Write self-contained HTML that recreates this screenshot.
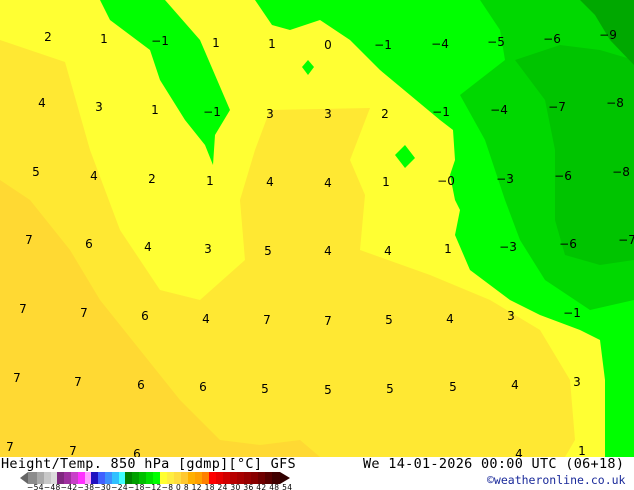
<!DOCTYPE html>
<html><head><meta charset="utf-8"><style>
body{margin:0;width:634px;height:490px;overflow:hidden;background:#fff;font-family:"DejaVu Sans Mono","Liberation Mono",monospace}
svg{position:absolute;left:0;top:0}
.l{font-family:"DejaVu Sans","Liberation Sans",sans-serif;font-size:12px;fill:#000;text-anchor:middle}
.t{position:absolute;font-size:13px;color:#000;white-space:pre;letter-spacing:0.3px}
</style></head><body>
<svg width="634" height="490">
<rect x="0" y="0" width="634" height="457" fill="#ffff33"/>
<polygon fill="#ffe833" points="0,40 65,62 90,150 120,230 160,290 200,300 245,260 240,200 255,150 270,110 370,108 350,160 365,195 360,250 430,275 490,300 540,330 570,380 575,440 565,457 0,457"/>
<polygon fill="#ffd933" points="0,180 30,200 70,250 100,300 140,350 180,400 220,440 260,445 300,440 320,457 0,457"/>
<polygon fill="#00ff00" points="100,0 165,0 200,40 230,110 215,135 213,165 205,145 185,120 160,80 150,50 110,20"/>
<polygon fill="#00ff00" points="255,0 634,0 634,457 605,457 605,380 600,340 580,330 540,315 510,300 470,270 455,235 460,210 455,200 450,175 455,160 453,130 440,120 410,95 380,70 350,40 320,20 290,30 272,25"/>
<polygon fill="#00ff00" points="395,155 405,145 415,158 405,168"/>
<polygon fill="#00ff00" points="308,60 314,67 308,75 302,67"/>
<polygon fill="#00d800" points="480,0 500,30 505,60 460,95 485,140 505,200 520,240 545,280 590,310 634,300 634,0"/>
<polygon fill="#00c400" points="515,60 545,100 555,150 555,220 565,255 600,265 634,260 634,60 600,50 560,45"/>
<polygon fill="#00a800" points="580,0 634,0 634,65 610,40 595,15"/>
<g class="l">
<text x="48" y="41">2</text><text x="104" y="43">1</text><text x="160" y="45">−1</text><text x="216" y="47">1</text><text x="272" y="48">1</text><text x="328" y="49">0</text><text x="383" y="49">−1</text><text x="440" y="48">−4</text><text x="496" y="46">−5</text><text x="552" y="43">−6</text><text x="608" y="39">−9</text>
<text x="42" y="107">4</text><text x="99" y="111">3</text><text x="155" y="114">1</text><text x="212" y="116">−1</text><text x="270" y="118">3</text><text x="328" y="118">3</text><text x="385" y="118">2</text><text x="441" y="116">−1</text><text x="499" y="114">−4</text><text x="557" y="111">−7</text><text x="615" y="107">−8</text>
<text x="36" y="176">5</text><text x="94" y="180">4</text><text x="152" y="183">2</text><text x="210" y="185">1</text><text x="270" y="186">4</text><text x="328" y="187">4</text><text x="386" y="186">1</text><text x="446" y="185">−0</text><text x="505" y="183">−3</text><text x="563" y="180">−6</text><text x="621" y="176">−8</text>
<text x="29" y="244">7</text><text x="89" y="248">6</text><text x="148" y="251">4</text><text x="208" y="253">3</text><text x="268" y="255">5</text><text x="328" y="255">4</text><text x="388" y="255">4</text><text x="448" y="253">1</text><text x="508" y="251">−3</text><text x="568" y="248">−6</text><text x="627" y="244">−7</text>
<text x="23" y="313">7</text><text x="84" y="317">7</text><text x="145" y="320">6</text><text x="206" y="323">4</text><text x="267" y="324">7</text><text x="328" y="325">7</text><text x="389" y="324">5</text><text x="450" y="323">4</text><text x="511" y="320">3</text><text x="572" y="317">−1</text>
<text x="17" y="382">7</text><text x="78" y="386">7</text><text x="141" y="389">6</text><text x="203" y="391">6</text><text x="265" y="393">5</text><text x="328" y="394">5</text><text x="390" y="393">5</text><text x="453" y="391">5</text><text x="515" y="389">4</text><text x="577" y="386">3</text>
<text x="10" y="451">7</text><text x="73" y="455">7</text><text x="137" y="458">6</text><text x="519" y="458">4</text><text x="582" y="455">1</text>
</g>
<rect x="0" y="457" width="634" height="33" fill="#fff"/>
<g>
<polygon points="20,478 28,472 28,484" fill="#666"/>
<rect x="28" y="472" width="9" height="12" fill="#8c8c8c"/><rect x="37" y="472" width="7" height="12" fill="#aaa"/><rect x="44" y="472" width="7" height="12" fill="#c8c8c8"/><rect x="51" y="472" width="6" height="12" fill="#dcdcdc"/>
<rect x="57" y="472" width="7" height="12" fill="#802880"/><rect x="64" y="472" width="7" height="12" fill="#a030a0"/><rect x="71" y="472" width="7" height="12" fill="#c840c8"/><rect x="78" y="472" width="7" height="12" fill="#ff30ff"/><rect x="85" y="472" width="6" height="12" fill="#ffa0ff"/>
<rect x="91" y="472" width="7" height="12" fill="#2010c0"/><rect x="98" y="472" width="7" height="12" fill="#4060ff"/><rect x="105" y="472" width="7" height="12" fill="#3c90ff"/><rect x="112" y="472" width="7" height="12" fill="#30c0ff"/><rect x="119" y="472" width="6" height="12" fill="#40ffff"/>
<rect x="125" y="472" width="7" height="12" fill="#008000"/><rect x="132" y="472" width="7" height="12" fill="#00a000"/><rect x="139" y="472" width="7" height="12" fill="#00c000"/><rect x="146" y="472" width="7" height="12" fill="#00e000"/><rect x="153" y="472" width="7" height="12" fill="#00ff00"/>
<rect x="160" y="472" width="7" height="12" fill="#ffff30"/><rect x="167" y="472" width="7" height="12" fill="#ffee40"/><rect x="174" y="472" width="7" height="12" fill="#ffdd40"/><rect x="181" y="472" width="7" height="12" fill="#ffc830"/><rect x="188" y="472" width="7" height="12" fill="#ffb000"/><rect x="195" y="472" width="7" height="12" fill="#ffa000"/><rect x="202" y="472" width="7" height="12" fill="#ff8000"/>
<rect x="209" y="472" width="7" height="12" fill="#ff0000"/><rect x="216" y="472" width="7" height="12" fill="#e80000"/><rect x="223" y="472" width="7" height="12" fill="#d00000"/><rect x="230" y="472" width="7" height="12" fill="#b80000"/><rect x="237" y="472" width="7" height="12" fill="#a80000"/><rect x="244" y="472" width="7" height="12" fill="#980000"/><rect x="251" y="472" width="7" height="12" fill="#880000"/><rect x="258" y="472" width="7" height="12" fill="#700000"/><rect x="265" y="472" width="7" height="12" fill="#580000"/><rect x="272" y="472" width="8" height="12" fill="#400000"/>
<polygon points="280,472 290,478 280,484" fill="#300000"/>
</g>
<text x="27" y="490" font-size="7.5" font-family="DejaVu Sans, sans-serif" fill="#000" textLength="265">−54−48−42−38−30−24−18−12−8  0  8  12 18 24 30 36 42 48 54</text>
</svg>
<div class="t" style="left:1px;top:456px;font-size:13.5px">Height/Temp. 850 hPa [gdmp][°C] GFS</div>
<div class="t" style="left:363px;top:456px;font-size:13.5px">We 14-01-2026 00:00 UTC (06+18)</div>
<div class="t" style="left:487px;top:473px;font-size:11.5px;color:#1a2a9a;letter-spacing:0">©weatheronline.co.uk</div>
</body></html>
